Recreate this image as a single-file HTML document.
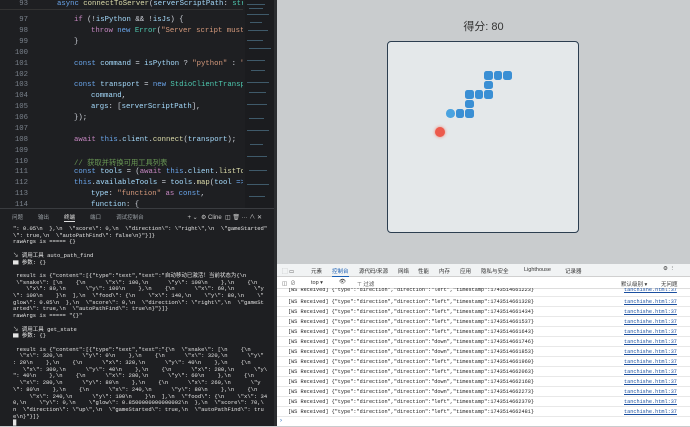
<!DOCTYPE html>
<html><head><meta charset="utf-8"><style>
*{margin:0;padding:0;box-sizing:border-box}
body{width:690px;height:426px;overflow:hidden;background:#c9ccce;position:relative;font-family:"Liberation Sans","Noto Sans CJK SC",sans-serif}
#left{position:absolute;left:0;top:0;width:274px;height:426px;background:#1e1f22}
#sep{position:absolute;left:274px;top:0;width:3px;height:426px;background:#2b2d30}
.code{position:absolute;left:0;top:0;width:243px;height:208px;font-family:"Liberation Mono","Noto Sans CJK SC",monospace;font-size:7.3px;color:#d0d4dc;overflow:hidden}
.ln{position:absolute;left:0;width:28px;text-align:right;color:#7a828c}
.cl{position:absolute;left:40px;white-space:pre}
.k{color:#6aa6ec}.f{color:#dcdcaa}.s{color:#d69a7c}.v{color:#a6dcfe}.c{color:#6a9955}.t{color:#4ec9b0}.p{color:#c586c0}
#mini{position:absolute;left:245px;top:0;width:29px;height:208px;background:#1b1c1f}
#mini i{position:absolute;height:1px;background:#3f5a6a}
#term{position:absolute;left:0;top:208px;width:274px;height:218px;background:#1e1f22;border-top:1px solid #3a3c40}
.tabs{position:absolute;top:4px;left:12px;font-size:5.5px;color:#9aa0a6}
.tabs span{margin-right:15px}
.tt{position:absolute;left:13px;top:17px;font-family:"Liberation Mono","Noto Sans CJK SC",monospace;font-size:5.5px;line-height:6.7px;color:#e4e4e4;white-space:pre}
#game{position:absolute;left:277px;top:0;width:413px;height:264px;background:#c9ccce}
#score{position:absolute;left:0;width:413px;top:18px;text-align:center;font-size:11px;color:#333}
#board{position:absolute;left:110px;top:41px;width:192px;height:192px;background:#e4e8ea;border:1.5px solid #2c3e50;border-radius:4px}
.sg{position:absolute;width:8.5px;height:8.5px;background:#3a8fd4;border-radius:2.5px}
#dev{position:absolute;left:277px;top:264px;width:413px;height:162px;background:#fff;font-size:5.5px;color:#333}
#dt1{height:13px;background:#f1f3f4;border-bottom:1px solid #d0d0d0;position:relative}
#dt2{height:12px;background:#fff;border-bottom:1px solid #ddd;position:relative}
.row{position:absolute;left:0;width:413px;height:10px;border-bottom:1px solid #e8e8e8;font-family:"Liberation Mono",monospace;font-size:5.2px;color:#222;line-height:10px}
.row b{font-weight:normal;position:absolute;left:11px;white-space:pre}
.row a{position:absolute;left:347px;color:#1a4fa0;text-decoration:underline}
</style></head><body>
<div id="left">
<div class="code">
<div class="ln" style="top:0">93</div><div class="cl" style="top:0;left:57px"><span class="k">async</span> <span class="f">connectToServer</span>(<span class="v">serverScriptPath</span>: <span class="t">str</span></div>
<div style="position:absolute;left:0;top:9px;width:245px;height:1px;background:#333"></div>
<div class="ln" style="top:16px">97</div><div class="cl" style="top:16px;left:74px"><span class="p">if</span> (!<span class="v">isPython</span> &amp;&amp; !<span class="v">isJs</span>) {</div>
<div class="ln" style="top:27px">98</div><div class="cl" style="top:27px;left:91px"><span class="p">throw</span> <span class="k">new</span> <span class="t">Error</span>(<span class="s">"Server script must</span></div>
<div class="ln" style="top:38px">99</div><div class="cl" style="top:38px;left:74px">}</div>
<div class="ln" style="top:49px">100</div>
<div class="ln" style="top:60px">101</div><div class="cl" style="top:60px;left:74px"><span class="k">const</span> <span class="v">command</span> = <span class="v">isPython</span> ? <span class="s">"python"</span> : <span class="s">"</span></div>
<div class="ln" style="top:71px">102</div>
<div class="ln" style="top:81px">103</div><div class="cl" style="top:81px;left:74px"><span class="k">const</span> <span class="v">transport</span> = <span class="k">new</span> <span class="t">StdioClientTransp</span></div>
<div class="ln" style="top:92px">104</div><div class="cl" style="top:92px;left:91px"><span class="v">command</span>,</div>
<div class="ln" style="top:103px">105</div><div class="cl" style="top:103px;left:91px"><span class="v">args</span>: [<span class="v">serverScriptPath</span>],</div>
<div class="ln" style="top:114px">106</div><div class="cl" style="top:114px;left:74px">});</div>
<div class="ln" style="top:125px">107</div>
<div class="ln" style="top:136px">108</div><div class="cl" style="top:136px;left:74px"><span class="p">await</span> <span class="k">this</span>.<span class="v">client</span>.<span class="f">connect</span>(<span class="v">transport</span>);</div>
<div class="ln" style="top:147px">109</div>
<div class="ln" style="top:158px">110</div><div class="cl c" style="top:158px;left:74px">// 获取并转换可用工具列表</div>
<div class="ln" style="top:168px">111</div><div class="cl" style="top:168px;left:74px"><span class="k">const</span> <span class="v">tools</span> = (<span class="p">await</span> <span class="k">this</span>.<span class="v">client</span>.<span class="f">listTo</span></div>
<div class="ln" style="top:179px">112</div><div class="cl" style="top:179px;left:74px"><span class="k">this</span>.<span class="v">availableTools</span> = <span class="v">tools</span>.<span class="f">map</span>(<span class="v">tool</span> <span class="k">=&gt;</span></div>
<div class="ln" style="top:190px">113</div><div class="cl" style="top:190px;left:91px"><span class="v">type</span>: <span class="s">"function"</span> <span class="p">as</span> <span class="k">const</span>,</div>
<div class="ln" style="top:201px">114</div><div class="cl" style="top:201px;left:91px"><span class="v">function</span>: {</div>
</div>
<div id="mini">
<i style="left:2px;top:4px;width:18px"></i><i style="left:4px;top:8px;width:14px"></i><i style="left:2px;top:14px;width:22px"></i><i style="left:5px;top:22px;width:12px"></i><i style="left:3px;top:30px;width:20px"></i><i style="left:2px;top:40px;width:16px"></i><i style="left:4px;top:48px;width:22px"></i><i style="left:2px;top:60px;width:18px"></i><i style="left:6px;top:70px;width:14px"></i><i style="left:2px;top:82px;width:22px"></i><i style="left:4px;top:92px;width:17px"></i><i style="left:2px;top:104px;width:20px"></i><i style="left:4px;top:118px;width:15px"></i><i style="left:2px;top:130px;width:22px"></i><i style="left:5px;top:144px;width:13px"></i><i style="left:2px;top:156px;width:20px"></i><i style="left:4px;top:170px;width:18px"></i><i style="left:2px;top:184px;width:22px"></i><i style="left:4px;top:196px;width:16px"></i>
</div>
<div id="term">
<div class="tabs"><span>问题</span><span>输出</span><span style="color:#e0e0e0;border-bottom:1px solid #e0e0e0">终端</span><span>端口</span><span>调试控制台</span></div>
<div style="position:absolute;right:12px;top:3px;font-size:6px;color:#ccc">+ ⌄ &nbsp;⚙ Cline &nbsp;◫ 🗑 ··· ∧ ✕</div>
<div class="tt">": 0.05\n  },\n  \"score\": 0,\n  \"direction\": \"right\",\n  \"gameStarted"
\": true,\n  \"autoPathFind\": false\n}"}]}
rawArgs is ===== {}

↘ 调用工具 auto_path_find
▆ 参数: {}

 result is {"content":[{"type":"text","text":"自动移动已激活！当前状态为{\n
 \"snake\": [\n    {\n      \"x\": 100,\n      \"y\": 100\n    },\n    {\n
    \"x\": 80,\n      \"y\": 100\n    },\n    {\n      \"x\": 60,\n      \"y
\": 100\n    }\n  ],\n  \"food\": {\n    \"x\": 140,\n    \"y\": 80,\n    \"
glow\": 0.05\n  },\n  \"score\": 0,\n  \"direction\": \"right\",\n  \"gameSt
arted\": true,\n  \"autoPathFind\": true\n}"}]}
rawArgs is ===== "{}"

↘ 调用工具 get_state
▆ 参数: {}

 result is {"content":[{"type":"text","text":"{\n  \"snake\": [\n    {\n
  \"x\": 320,\n      \"y\": 0\n    },\n    {\n      \"x\": 320,\n      \"y\"
: 20\n    },\n    {\n      \"x\": 320,\n      \"y\": 40\n    },\n    {\n
   \"x\": 300,\n      \"y\": 40\n    },\n    {\n      \"x\": 280,\n      \"y\
": 40\n    },\n    {\n      \"x\": 280,\n      \"y\": 60\n    },\n    {\n
  \"x\": 280,\n      \"y\": 80\n    },\n    {\n      \"x\": 260,\n      \"y
\": 80\n    },\n    {\n      \"x\": 240,\n      \"y\": 80\n    },\n    {\n
     \"x\": 240,\n      \"y\": 100\n    }\n  ],\n  \"food\": {\n    \"x\": 34
0,\n    \"y\": 0,\n    \"glow\": 0.8500000000000002\n  },\n  \"score\": 70,\
n  \"direction\": \"up\",\n  \"gameStarted\": true,\n  \"autoPathFind\": tru
e\n}"}]}
█</div>
</div>
</div>
<div id="sep"></div>
<div id="game">
<div id="score">得分: 80</div>
<div id="board">
<div class="sg" style="left:96px;top:29px"></div><div class="sg" style="left:105.5px;top:29px"></div><div class="sg" style="left:115px;top:29px"></div>
<div class="sg" style="left:96px;top:38.5px"></div>
<div class="sg" style="left:77px;top:48px"></div><div class="sg" style="left:86.5px;top:48px"></div><div class="sg" style="left:96px;top:48px"></div>
<div class="sg" style="left:77px;top:57.5px"></div>
<div class="sg" style="left:58px;top:67px;background:#4aa3e0;border-radius:50%"></div><div class="sg" style="left:67.5px;top:67px"></div><div class="sg" style="left:77px;top:67px"></div>
<div style="position:absolute;left:47px;top:85px;width:10px;height:10px;border-radius:50%;background:#ec5a4c;box-shadow:0 0 3px #f08070"></div>
</div>
</div>
<div id="dev">
<div id="dt1">
<span style="position:absolute;left:5px;top:3px;color:#555">⬚ ▭</span>
<span style="position:absolute;left:34px;top:3px">元素</span>
<span style="position:absolute;left:55px;top:3px;color:#1a5fb4;border-bottom:1.5px solid #1a5fb4;padding-bottom:1px">控制台</span>
<span style="position:absolute;left:82px;top:3px">源代码/来源</span>
<span style="position:absolute;left:121px;top:3px">网络</span>
<span style="position:absolute;left:141px;top:3px">性能</span>
<span style="position:absolute;left:162px;top:3px">内存</span>
<span style="position:absolute;left:183px;top:3px">应用</span>
<span style="position:absolute;left:204px;top:3px">隐私与安全</span>
<span style="position:absolute;left:247px;top:3px">Lighthouse</span>
<span style="position:absolute;left:288px;top:3px">记录器</span>
<span style="position:absolute;left:386px;top:2px">⚙ ⋮</span>
</div>
<div id="dt2">
<span style="position:absolute;left:5px;top:2px;color:#555">◫ &nbsp;⊘</span>
<span style="position:absolute;left:34px;top:3px">top ▾</span>
<span style="position:absolute;left:62px;top:2px">👁</span>
<span style="position:absolute;left:80px;top:3px;color:#555">⊤ 过滤</span>
<span style="position:absolute;left:344px;top:3px">默认级别 ▾</span>
<span style="position:absolute;left:384px;top:3px">无问题</span>
</div>
<div class="row" style="top:24px;height:9px;line-height:4px;overflow:hidden"><b>[WS Received] {"type":"direction","direction":"left","timestamp":1743514661223}</b><a>tanchishe.html:37</a></div>
<div class="row" style="top:33px"><b>[WS Received] {"type":"direction","direction":"left","timestamp":1743514661328}</b><a>tanchishe.html:37</a></div>
<div class="row" style="top:43px"><b>[WS Received] {"type":"direction","direction":"left","timestamp":1743514661434}</b><a>tanchishe.html:37</a></div>
<div class="row" style="top:53px"><b>[WS Received] {"type":"direction","direction":"left","timestamp":1743514661537}</b><a>tanchishe.html:37</a></div>
<div class="row" style="top:63px"><b>[WS Received] {"type":"direction","direction":"left","timestamp":1743514661643}</b><a>tanchishe.html:37</a></div>
<div class="row" style="top:73px"><b>[WS Received] {"type":"direction","direction":"down","timestamp":1743514661746}</b><a>tanchishe.html:37</a></div>
<div class="row" style="top:83px"><b>[WS Received] {"type":"direction","direction":"down","timestamp":1743514661853}</b><a>tanchishe.html:37</a></div>
<div class="row" style="top:93px"><b>[WS Received] {"type":"direction","direction":"left","timestamp":1743514661960}</b><a>tanchishe.html:37</a></div>
<div class="row" style="top:103px"><b>[WS Received] {"type":"direction","direction":"left","timestamp":1743514662063}</b><a>tanchishe.html:37</a></div>
<div class="row" style="top:113px"><b>[WS Received] {"type":"direction","direction":"down","timestamp":1743514662168}</b><a>tanchishe.html:37</a></div>
<div class="row" style="top:123px"><b>[WS Received] {"type":"direction","direction":"down","timestamp":1743514662273}</b><a>tanchishe.html:37</a></div>
<div class="row" style="top:133px"><b>[WS Received] {"type":"direction","direction":"left","timestamp":1743514662379}</b><a>tanchishe.html:37</a></div>
<div class="row" style="top:143px"><b>[WS Received] {"type":"direction","direction":"left","timestamp":1743514662481}</b><a>tanchishe.html:37</a></div>
<div style="position:absolute;left:3px;top:154px;color:#1a5fb4;font-size:6px">›</div>
</div>
</body></html>
